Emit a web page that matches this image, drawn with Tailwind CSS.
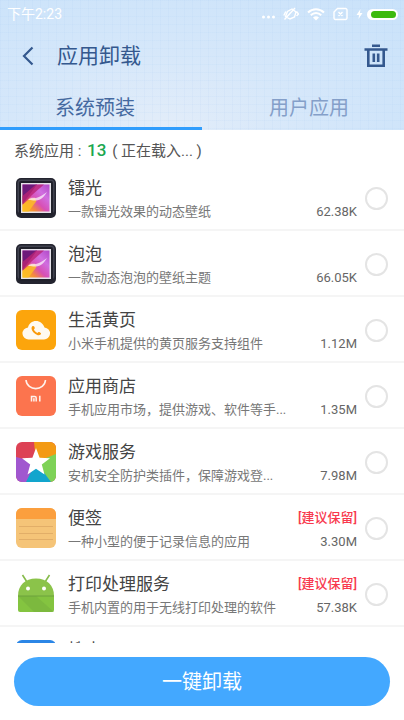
<!DOCTYPE html>
<html lang="zh-CN">
<head>
  <meta charset="UTF-8">
  <title>应用卸载</title>
  <meta name="viewport" content="width=device-width, initial-scale=1">
  <script src="https://cdn.jsdelivr.net/npm/@tailwindcss/browser@4"></script>
</head>
<body class="h-screen flex flex-col overflow-hidden bg-white font-['Roboto','Noto_Sans_CJK_SC',sans-serif] text-[#444]">

  <header class="shrink-0 bg-[linear-gradient(#a9cbee1c_1px,transparent_1px),linear-gradient(90deg,#a9cbee1c_1px,transparent_1px),radial-gradient(ellipse_at_40%_100%,#e3edf9_0%,#d5e7fa_45%,#c9e2fa_100%)] bg-[size:8px_8px,8px_8px,100%_100%]">
    <!-- status bar -->
    <div class="h-7 pl-[7px] pr-[6px] flex items-center justify-between text-white text-[14px]">
      <span>下午2:23</span>
      <div class="flex items-center gap-2">
        <svg class="w-[13px] h-3" viewBox="0 0 13 12" fill="#fff"><circle cx="1.500" cy="9" r="1.500"/><circle cx="6.500" cy="9" r="1.500"/><circle cx="11.500" cy="9" r="1.500"/></svg>
        <svg class="w-4 h-[14px]" viewBox="0 0 16 14" fill="none" stroke="#fff" stroke-width="1.4"><path d="M2.500 9.500 4.500 4.500 9 2l4 3-1.500 5L7 12zM1.500 12.500 12 1M0.800 8.500 2.800 4.500M13.500 4.500l2 2.500-2 2"/></svg>
        <svg class="w-[18px] h-[14px]" viewBox="0 0 18 14" fill="none" stroke="#fff" stroke-width="2"><path d="M1 5.500c4.500-4.500 11.500-4.500 16 0M3.800 8.200c3-3 7.400-3 10.400 0"/><path d="M6 10.500c2-1.600 4-1.600 6 0l-3 3z" fill="#fff" stroke="none"/></svg>
        <svg class="w-[15px] h-[14px]" viewBox="0 0 15 14" fill="none" stroke="#fff" stroke-width="1.4"><path d="M4.500 1.500h8a1.500 1.500 0 0 1 1.500 1.500v8a1.500 1.500 0 0 1-1.500 1.500h-10A1.500 1.500 0 0 1 1 11V5zM5.500 5l4 4M9.500 5l-4 4"/></svg>
        <div class="flex items-center gap-1">
          <svg class="w-[7px] h-3" viewBox="0 0 7 12" fill="#fff"><path d="M4.500 1 0.500 7H3L2.500 11 6.500 5H4z"/></svg>
          <span class="w-[31px] h-[11px] rounded-full bg-white p-[2px] pl-1"><span class="block h-full rounded-full bg-[#3cba0e]"></span></span>
        </div>
      </div>
    </div>

    <!-- title bar -->
    <div class="h-14 px-4 flex items-center text-[#34588e]">
      <button type="button" aria-label="返回" class="w-[41px] h-10 pl-[6px]">
        <svg class="w-3 h-5" viewBox="0 0 12 20" fill="none" stroke="currentColor" stroke-width="2.200"><path d="M10.500 1.500 2 10l8.500 8.500"/></svg>
      </button>
      <h1 class="flex-1 text-[21px] leading-7">应用卸载</h1>
      <button type="button" aria-label="清理" class="w-6 h-10">
        <svg class="w-6 h-6" viewBox="0 0 24 24" fill="none" stroke="currentColor" stroke-width="2.600"><path d="M8 1.800h8M0.500 5.500h23M4.300 6v15.700h15.400V6M9.800 9.500v8.500M14.200 9.500v8.500"/></svg>
      </button>
    </div>

    <!-- tabs -->
    <nav class="h-[46px] flex text-[20px] leading-12 text-center">
      <a href="#system" class="flex-1 pr-3 border-b-[3px] border-[#2f9dfd] text-[#4569a0]">系统预装</a>
      <a href="#user" class="flex-1 pl-3 text-[#849fc9]">用户应用</a>
    </nav>
  </header>

  <main class="flex-1 min-h-0 overflow-hidden">
    <p class="h-[35px] pl-[14px] leading-10 text-[15px] text-[#555]">系统应用 : <span class="mx-[2px] text-[17px] font-medium text-[#1ba750]">13</span> ( 正在载入... )</p>

    <ul>
      <li class="border-b-2 border-[#f5f5f5]">
        <label class="h-16 pt-[2px] px-4 flex items-center gap-3">
          <svg class="w-10 h-10" viewBox="0 0 40 40">
            <defs>
              <linearGradient id="art" x1="0" y1="1" x2="1" y2="0"><stop offset="0" stop-color="#fbc51c"/><stop offset=".25" stop-color="#f58a3c"/><stop offset=".45" stop-color="#d84fb4"/><stop offset=".7" stop-color="#d06ee0"/><stop offset="1" stop-color="#b048c8"/></linearGradient>
              <g id="frame">
                <rect width="40" height="40" rx="5" fill="#23242f"/>
                <rect x="1.500" y="1.500" width="37" height="34" rx="4" fill="#40424f"/>
                <rect x="3" y="3" width="34" height="34" rx="2" fill="#20212b"/>
                <rect x="5" y="5" width="30" height="30" fill="#e6e3ea"/>
                <rect x="6.500" y="6.500" width="27" height="27" fill="url(#art)"/>
                <path d="M6.500 6.500H21L11 20l-4.500 6z" fill="#6d1a7a"/>
                <path d="M6.500 27 16 17 28 6.500H20L6.500 18z" fill="#b92374" opacity=".8"/>
                <path d="M6.500 33.500V27l6-5 6-2 2 3-8 10.500z" fill="#fdbd24" opacity=".85"/>
                <path d="M12 22c3-3 5-2 8-2 4-1 8-4 11-6-3 5-6 8-11 8.500-3 .5-5-1-8-.5z" fill="#fff" opacity=".7"/>
              </g>
            </defs>
            <use href="#frame"/>
          </svg>
          <span class="flex-1 pt-1">
            <span class="block text-[17px] leading-6">镭光</span>
            <span class="flex justify-between text-[13px] leading-6 text-[#777]"><span>一款镭光效果的动态壁纸</span><span class="-mr-1 text-[#666]">62.38K</span></span>
          </span>
          <input type="checkbox" class="appearance-none w-[23px] h-[23px] rounded-full border-2 border-[#e4e4e4]">
        </label>
      </li>

      <li class="border-b-2 border-[#f5f5f5]">
        <label class="h-16 pt-[2px] px-4 flex items-center gap-3">
          <svg class="w-10 h-10" viewBox="0 0 40 40"><use href="#frame"/></svg>
          <span class="flex-1 pt-1">
            <span class="block text-[17px] leading-6">泡泡</span>
            <span class="flex justify-between text-[13px] leading-6 text-[#777]"><span>一款动态泡泡的壁纸主题</span><span class="-mr-1 text-[#666]">66.05K</span></span>
          </span>
          <input type="checkbox" class="appearance-none w-[23px] h-[23px] rounded-full border-2 border-[#e4e4e4]">
        </label>
      </li>

      <li class="border-b-2 border-[#f5f5f5]">
        <label class="h-16 pt-[2px] px-4 flex items-center gap-3">
          <svg class="w-10 h-10" viewBox="0 0 40 40">
            <rect width="40" height="40" rx="6" fill="#fca50c"/>
            <path d="M13 29.500a6 6 0 0 1-1-12c1-4 4-6.500 8-6.500s7 2.500 8.500 6.500a6 6 0 0 1-1 12z" fill="#fffaf0"/>
            <path d="M16.300 16.300c.8-.8 1.700-.4 2.200.7.500 1.200.2 1.700-.6 2.600.8 1.700 1.800 2.700 3.500 3.300.9-1 1.500-1 2.600-.5 1.200.6 1.300 1.300.6 2.200-1.300 1.300-3.500.9-5.800-1-2.800-2.400-4.200-5.400-2.500-7.300z" fill="#fa9a0a"/>
          </svg>
          <span class="flex-1 pt-1">
            <span class="block text-[17px] leading-6">生活黄页</span>
            <span class="flex justify-between text-[13px] leading-6 text-[#777]"><span>小米手机提供的黄页服务支持组件</span><span class="-mr-1 text-[#666]">1.12M</span></span>
          </span>
          <input type="checkbox" class="appearance-none w-[23px] h-[23px] rounded-full border-2 border-[#e4e4e4]">
        </label>
      </li>

      <li class="border-b-2 border-[#f5f5f5]">
        <label class="h-16 pt-[2px] px-4 flex items-center gap-3">
          <svg class="w-10 h-10" viewBox="0 0 40 40" fill="none">
            <rect width="40" height="40" rx="6" fill="#fc744e"/>
            <path d="M10 4c1 11.500 18.500 11.500 19.500 0" stroke="#fff2ec" stroke-width="1.600"/>
            <path d="M15.500 25.500v-5h3.300a1.400 1.400 0 0 1 1.400 1.400v3.600M17.900 22.300v3.200M23.800 19.800v5.700" stroke="#fff2ec" stroke-width="1.500"/>
          </svg>
          <span class="flex-1 pt-1">
            <span class="block text-[17px] leading-6">应用商店</span>
            <span class="flex justify-between text-[13px] leading-6 text-[#777]"><span>手机应用市场，提供游戏、软件等手...</span><span class="-mr-1 text-[#666]">1.35M</span></span>
          </span>
          <input type="checkbox" class="appearance-none w-[23px] h-[23px] rounded-full border-2 border-[#e4e4e4]">
        </label>
      </li>

      <li class="border-b-2 border-[#f5f5f5]">
        <label class="h-16 pt-[2px] px-4 flex items-center gap-3">
          <svg class="w-10 h-10 rounded-[6px]" viewBox="0 0 40 40">
            <rect width="40" height="40" fill="#dd4255"/>
            <path d="M20 20 18 0h22v13z" fill="#f39a14"/>
            <path d="M20 20 40 12v28h-7z" fill="#7ed257"/>
            <path d="M20 20 35 40H8z" fill="#12a5cd"/>
            <path d="M20 20 10 40H0V15z" fill="#a157cf"/>
            <path d="M20 6 23.600 15.800 34 16.200 25.800 22.500 28.500 32.500 20 26.800 11.500 32.500 14.200 22.500 6 16.200 16.400 15.800z" fill="#fff"/>
          </svg>
          <span class="flex-1 pt-1">
            <span class="block text-[17px] leading-6">游戏服务</span>
            <span class="flex justify-between text-[13px] leading-6 text-[#777]"><span>安机安全防护类插件，保障游戏登...</span><span class="-mr-1 text-[#666]">7.98M</span></span>
          </span>
          <input type="checkbox" class="appearance-none w-[23px] h-[23px] rounded-full border-2 border-[#e4e4e4]">
        </label>
      </li>

      <li class="border-b-2 border-[#f5f5f5]">
        <label class="h-16 pt-[2px] px-4 flex items-center gap-3">
          <svg class="w-10 h-10 rounded-[6px]" viewBox="0 0 40 40">
            <rect width="40" height="40" fill="#f5c478"/>
            <rect width="40" height="11" fill="#fb9f3e"/>
            <path d="M3 18.500h34M3 25.500h34M3 31.500h34" stroke="#e2ae68"/>
          </svg>
          <span class="flex-1 pt-1">
            <span class="flex justify-between text-[17px] leading-6">便签<span class="-mr-1 text-[13px] font-medium text-[#f8384d]">[建议保留]</span></span>
            <span class="flex justify-between text-[13px] leading-6 text-[#777]"><span>一种小型的便于记录信息的应用</span><span class="-mr-1 text-[#666]">3.30M</span></span>
          </span>
          <input type="checkbox" class="appearance-none w-[23px] h-[23px] rounded-full border-2 border-[#e4e4e4]">
        </label>
      </li>

      <li class="border-b-2 border-[#f5f5f5]">
        <label class="h-16 pt-[2px] px-4 flex items-center gap-3">
          <svg class="w-10 h-10" viewBox="0 0 40 40">
            <path d="M6.500 1 11 8M33.500 1 29 8" stroke="#86bb4b" stroke-width="1.600"/>
            <path d="M2 22C2 11 9 4.500 20 4.500S38 11 38 22z" fill="#8bc34a"/>
            <path d="M2 22h36v14a2 2 0 0 1-2 2H4a2 2 0 0 1-2-2z" fill="#84c440"/>
            <path d="M2 22h18L38 38H18z" fill="#73ad3b" opacity=".5"/>
            <path d="M2 22h36" stroke="#6da23c"/>
            <circle cx="12" cy="14.500" r="2" fill="#fff"/><circle cx="28" cy="14.500" r="2" fill="#fff"/>
          </svg>
          <span class="flex-1 pt-1">
            <span class="flex justify-between text-[17px] leading-6">打印处理服务<span class="-mr-1 text-[13px] font-medium text-[#f8384d]">[建议保留]</span></span>
            <span class="flex justify-between text-[13px] leading-6 text-[#777]"><span>手机内置的用于无线打印处理的软件</span><span class="-mr-1 text-[#666]">57.38K</span></span>
          </span>
          <input type="checkbox" class="appearance-none w-[23px] h-[23px] rounded-full border-2 border-[#e4e4e4]">
        </label>
      </li>

      <li class="border-b-2 border-[#f5f5f5]">
        <label class="h-16 pt-[2px] px-4 flex items-center gap-3">
          <svg class="w-10 h-10" viewBox="0 0 40 40"><rect width="40" height="40" rx="6" fill="#2b86e6"/></svg>
          <span class="flex-1 pt-1">
            <span class="flex justify-between text-[17px] leading-6">搜索<span class="-mr-1 text-[13px] font-medium text-[#f8384d]">[建议保留]</span></span>
            <span class="block text-[13px] leading-6">&nbsp;</span>
          </span>
          <input type="checkbox" class="appearance-none w-[23px] h-[23px] rounded-full border-2 border-[#e4e4e4]">
        </label>
      </li>
    </ul>
  </main>

  <footer class="shrink-0 px-[14px] pt-[14px] pb-[14px]">
    <button type="button" class="w-full h-[49px] rounded-full bg-[#43a8ff] text-white text-[20px]">一键卸载</button>
  </footer>

</body>
</html>
